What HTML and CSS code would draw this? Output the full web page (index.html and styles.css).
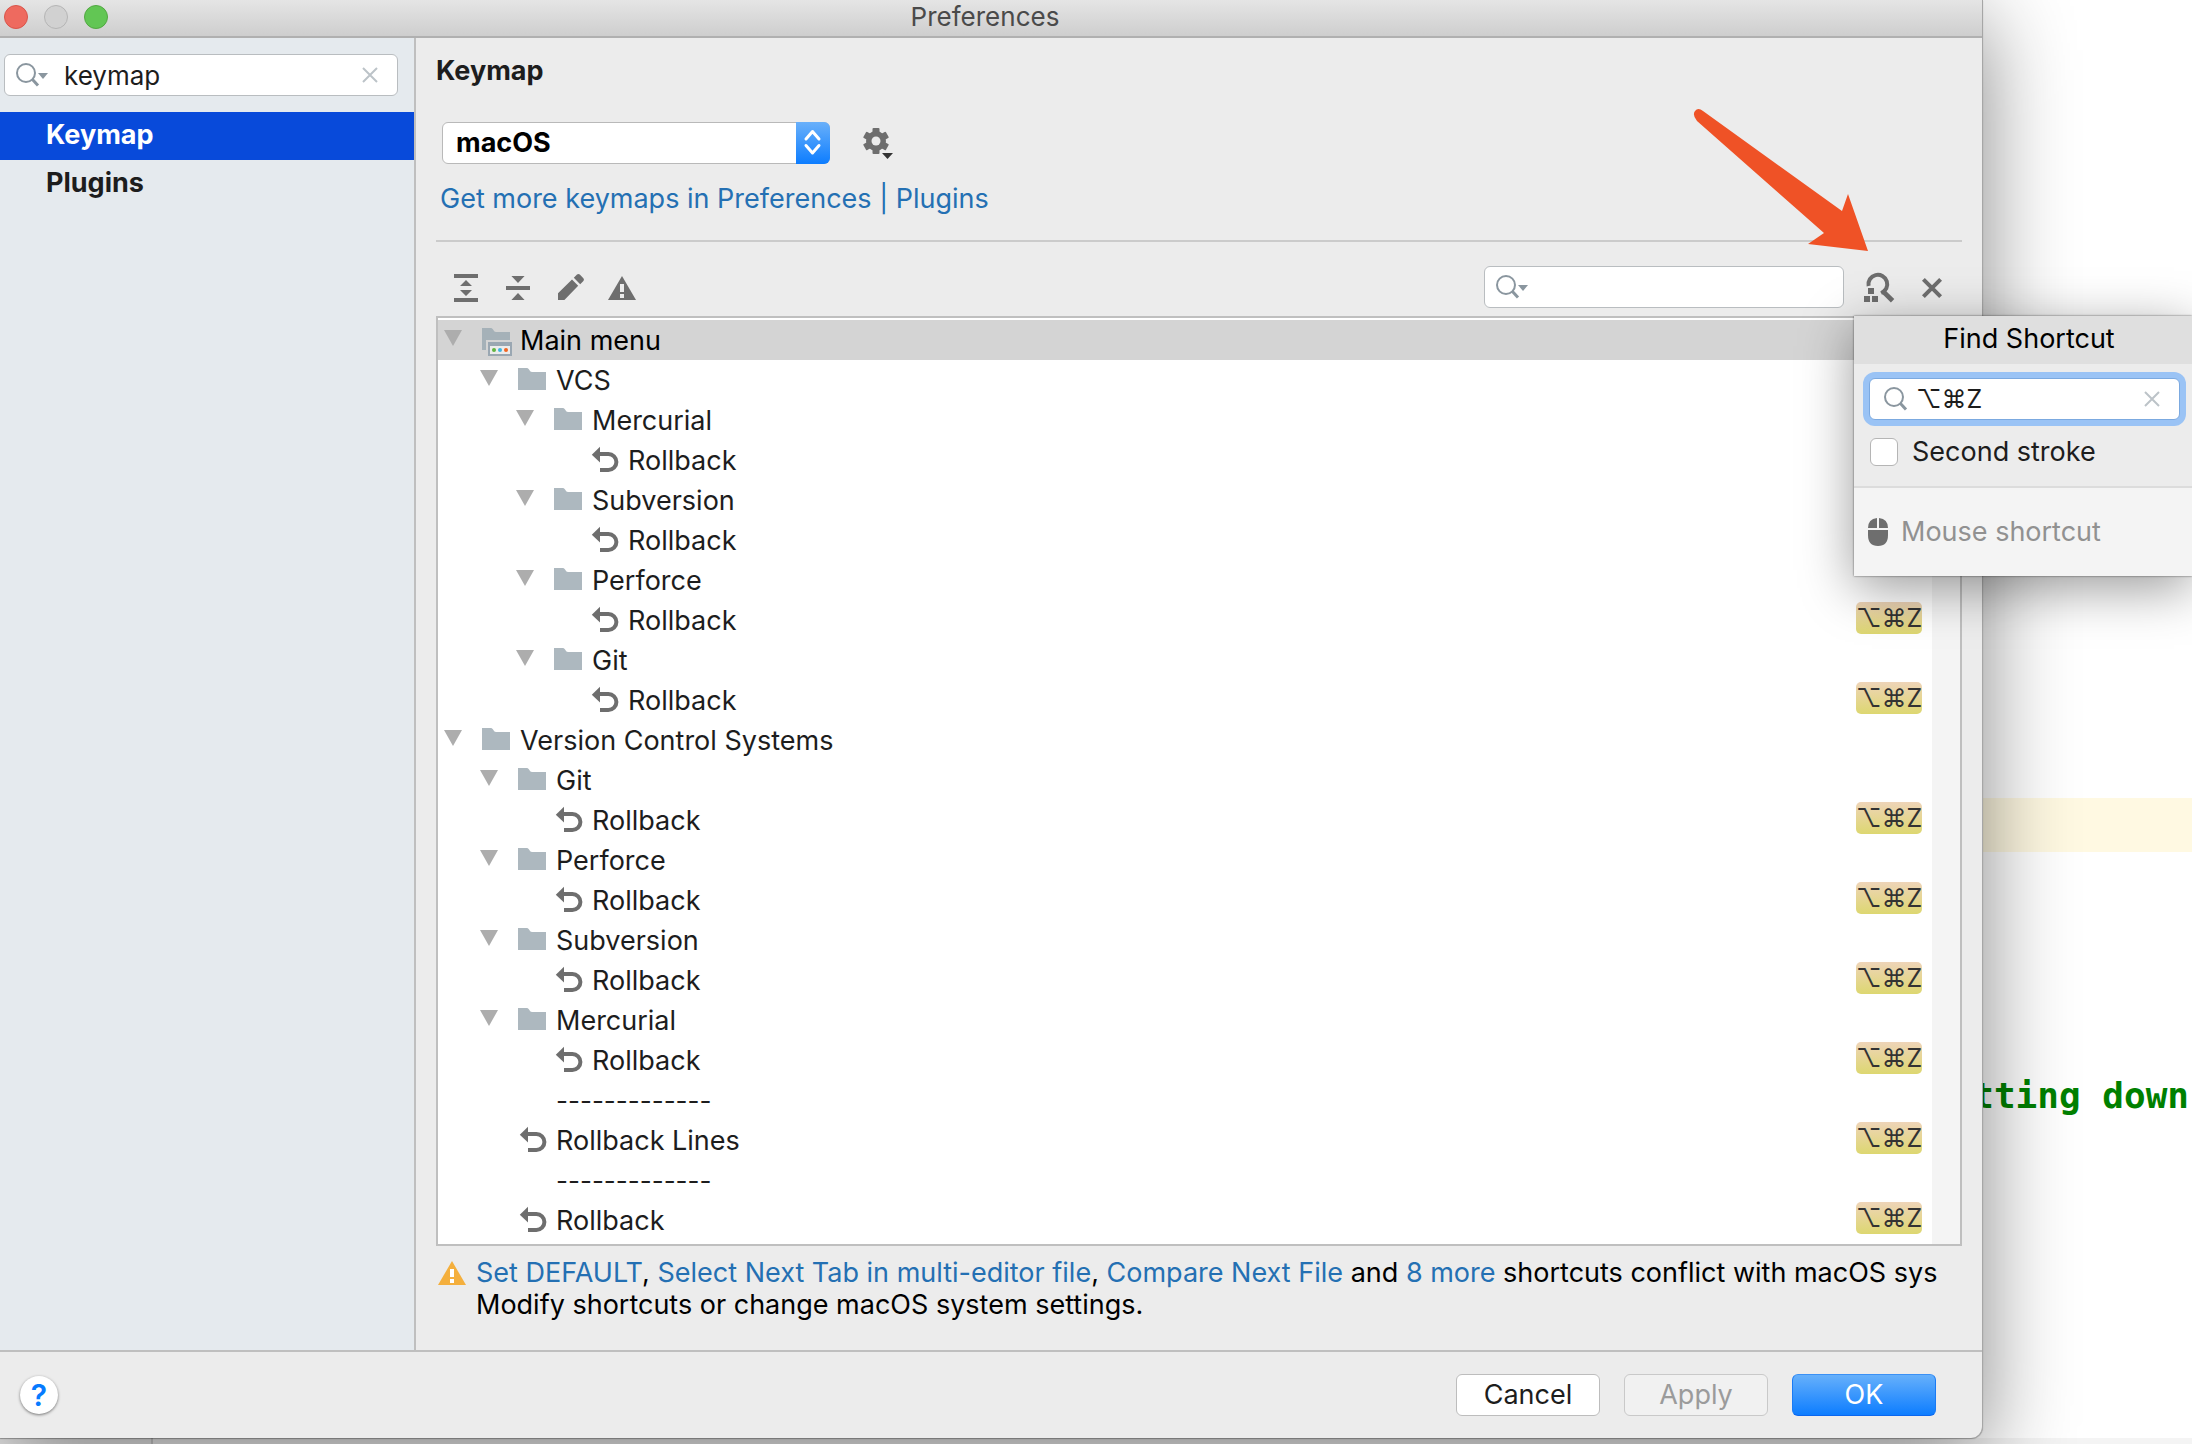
FILE: index.html
```html
<!DOCTYPE html>
<html lang="en">
<head>
<meta charset="utf-8">
<title>Preferences</title>
<link rel="stylesheet" href="styles.css">
</head>
<body>
<svg class="sprite" aria-hidden="true">
  <symbol id="i-arrow" viewBox="0 0 18 16"><path d="M0 0H18L9 16Z" fill="#adadad"/></symbol>
  <symbol id="i-folder" viewBox="0 1 16 16"><path d="M1 3H5.500C6.600 3 6.800 5 8 5H15V14H1Z" fill="#adb8bf"/></symbol>
  <symbol id="i-menu" viewBox="0 1 16 16"><path d="M1 3H5.500C6.600 3 6.800 5 8 5H15V9H3V14H1Z" fill="#a5b1b8"/><path d="M4 10H16V17H4Z" fill="#9aa7b2"/><path d="M5 12H15V16H5Z" fill="#ececec"/><circle cx="7" cy="14" r="1" fill="#62b543"/><circle cx="10" cy="14" r="1" fill="#40b6e0"/><circle cx="13" cy="14" r="1" fill="#f26522"/></symbol>
  <symbol id="i-undo" viewBox="0 2 16 16"><path d="M1.900 7.400L6 3.400V11.200Z" fill="#6e6e6e"/><path d="M5 7H10.200A4 4 0 0 1 10.200 15H6" fill="none" stroke="#6e6e6e" stroke-width="2"/></symbol>
  <symbol id="i-search" viewBox="0 0 24 24"><circle cx="10" cy="10" r="9" fill="none" stroke="#8a969f" stroke-width="2"/><path d="M16 16L22 22.500" stroke="#8a969f" stroke-width="3"/></symbol>
  <symbol id="i-search-menu" viewBox="0 0 34 24"><circle cx="10" cy="10" r="9" fill="none" stroke="#8a969f" stroke-width="2"/><path d="M16 16L22 22.500" stroke="#8a969f" stroke-width="3"/><path d="M22 10H32L27 16Z" fill="#8a969f"/></symbol>
  <symbol id="i-clear" viewBox="0 0 16 16"><path d="M1 1L15 15M15 1L1 15" stroke="#bcc3c8" stroke-width="2"/></symbol>
</svg>

<div class="desktop">
  <main class="window">
    <header class="titlebar">
      <div class="lights">
        <button class="light red" aria-label="Close"></button>
        <button class="light" aria-label="Minimize"></button>
        <button class="light green" aria-label="Zoom"></button>
      </div>
      <h1>Preferences</h1>
    </header>

    <div class="panes">
      <nav class="sidebar">
        <div class="field side-search">
          <svg width="34" height="24"><use href="#i-search-menu"/></svg>
          <input type="text" value="keymap" aria-label="Search preferences">
          <button class="plain" aria-label="Clear"><svg width="16" height="16"><use href="#i-clear"/></svg></button>
        </div>
        <a class="nav-item current" href="#keymap">Keymap</a>
        <a class="nav-item" href="#plugins">Plugins</a>
      </nav>

      <section class="content" id="keymap">
        <h2>Keymap</h2>
        <div class="scheme">
          <div class="combo">
            <select aria-label="Keymap scheme"><option>macOS</option></select>
            <svg class="combo-cap" width="34" height="42" viewBox="0 0 34 42" aria-hidden="true"><path d="M10 17L16.500 9.500L23 17M10 23.500L16.500 31L23 23.500" fill="none" stroke="#fff" stroke-width="3" stroke-linecap="round" stroke-linejoin="round"/></svg>
          </div>
          <button class="plain" aria-label="Scheme actions">
            <svg width="32" height="34" viewBox="0 -1 32 34"><g fill="#6e6e6e"><rect x="9.500" y="1" width="7" height="26" rx="1"/><rect x="9.500" y="1" width="7" height="26" rx="1" transform="rotate(60 13 14)"/><rect x="9.500" y="1" width="7" height="26" rx="1" transform="rotate(120 13 14)"/><circle cx="13" cy="14" r="10"/></g><circle cx="13" cy="14" r="4.500" fill="#ececec"/><path d="M19 26H30L24.500 32Z" fill="#333"/></svg>
          </button>
        </div>
        <a class="more" href="#plugins">Get more keymaps in Preferences | Plugins</a>
        <hr>
        <div class="toolbar">
          <button class="plain" aria-label="Expand all"><svg width="32" height="32" viewBox="0 0 16 16" fill="#6e6e6e"><path d="M2 1H14V3H2ZM2 13H14V15H2ZM8 4L11 7H5ZM5 9H11L8 12Z"/></svg></button>
          <button class="plain" aria-label="Collapse all"><svg width="32" height="32" viewBox="0 0 16 16" fill="#6e6e6e"><path d="M2 7H14V9H2ZM4.700 2H11.300L8 5.500ZM8 10.500L11.300 14H4.700Z"/></svg></button>
          <button class="plain" aria-label="Edit shortcut"><svg width="32" height="32" viewBox="0 0 16 16" fill="#6e6e6e"><path d="M2 10.600L9 3.800L12.100 6.900L5.200 14H2ZM9.900 2.900L11.500 1.300Q12.200 .7 12.900 1.300L14.700 3.100Q15.300 3.800 14.700 4.500L13.100 6.100Z"/></svg></button>
          <button class="plain" aria-label="Show conflicts"><svg width="32" height="32" viewBox="0 0 16 16"><path d="M8 2L15 14H1Z" fill="#6e6e6e"/><path d="M7 6H9V10H7ZM7 11H9V13H7Z" fill="#ececec"/></svg></button>
          <div class="field tree-search">
            <svg width="34" height="24"><use href="#i-search-menu"/></svg>
            <input type="text" aria-label="Search actions">
          </div>
          <button class="plain" aria-label="Find by shortcut"><svg width="32" height="32" viewBox="1 0 16 16"><path d="M3.200 7A4.700 4.700 0 1 1 9.500 10.500" fill="none" stroke="#6e6e6e" stroke-width="2" transform="translate(.1 0)"/><path d="M10 9.200L15.300 14.400" stroke="#6e6e6e" stroke-width="2.400"/><path d="M3 8H6V11H3ZM1 12H4V15H1ZM5 12H8V15H5Z" fill="#6e6e6e"/></svg></button>
          <button class="plain" aria-label="Clear filter"><svg width="32" height="32" viewBox="0 0 16 16"><path d="M3.700 3.700L12.300 12.300M12.300 3.700L3.700 12.300" stroke="#6e6e6e" stroke-width="2"/></svg></button>
        </div>

        <div class="tree">
          <ul>
            <li class="row selected"><svg class="twist"><use href="#i-arrow"/></svg><svg class="ico"><use href="#i-menu"/></svg><span>Main menu</span></li>
            <li class="row l1"><svg class="twist"><use href="#i-arrow"/></svg><svg class="ico"><use href="#i-folder"/></svg><span>VCS</span></li>
            <li class="row l2"><svg class="twist"><use href="#i-arrow"/></svg><svg class="ico"><use href="#i-folder"/></svg><span>Mercurial</span></li>
            <li class="row leaf l3"><svg class="ico"><use href="#i-undo"/></svg><span>Rollback</span></li>
            <li class="row l2"><svg class="twist"><use href="#i-arrow"/></svg><svg class="ico"><use href="#i-folder"/></svg><span>Subversion</span></li>
            <li class="row leaf l3"><svg class="ico"><use href="#i-undo"/></svg><span>Rollback</span></li>
            <li class="row l2"><svg class="twist"><use href="#i-arrow"/></svg><svg class="ico"><use href="#i-folder"/></svg><span>Perforce</span></li>
            <li class="row leaf l3"><svg class="ico"><use href="#i-undo"/></svg><span>Rollback</span><kbd>⌥⌘Z</kbd></li>
            <li class="row l2"><svg class="twist"><use href="#i-arrow"/></svg><svg class="ico"><use href="#i-folder"/></svg><span>Git</span></li>
            <li class="row leaf l3"><svg class="ico"><use href="#i-undo"/></svg><span>Rollback</span><kbd>⌥⌘Z</kbd></li>
            <li class="row"><svg class="twist"><use href="#i-arrow"/></svg><svg class="ico"><use href="#i-folder"/></svg><span>Version Control Systems</span></li>
            <li class="row l1"><svg class="twist"><use href="#i-arrow"/></svg><svg class="ico"><use href="#i-folder"/></svg><span>Git</span></li>
            <li class="row leaf l2"><svg class="ico"><use href="#i-undo"/></svg><span>Rollback</span><kbd>⌥⌘Z</kbd></li>
            <li class="row l1"><svg class="twist"><use href="#i-arrow"/></svg><svg class="ico"><use href="#i-folder"/></svg><span>Perforce</span></li>
            <li class="row leaf l2"><svg class="ico"><use href="#i-undo"/></svg><span>Rollback</span><kbd>⌥⌘Z</kbd></li>
            <li class="row l1"><svg class="twist"><use href="#i-arrow"/></svg><svg class="ico"><use href="#i-folder"/></svg><span>Subversion</span></li>
            <li class="row leaf l2"><svg class="ico"><use href="#i-undo"/></svg><span>Rollback</span><kbd>⌥⌘Z</kbd></li>
            <li class="row l1"><svg class="twist"><use href="#i-arrow"/></svg><svg class="ico"><use href="#i-folder"/></svg><span>Mercurial</span></li>
            <li class="row leaf l2"><svg class="ico"><use href="#i-undo"/></svg><span>Rollback</span><kbd>⌥⌘Z</kbd></li>
            <li class="row leaf l1"><svg class="ico"></svg><span class="divider">-------------</span></li>
            <li class="row leaf l1"><svg class="ico"><use href="#i-undo"/></svg><span>Rollback Lines</span><kbd>⌥⌘Z</kbd></li>
            <li class="row leaf l1"><svg class="ico"></svg><span class="divider">-------------</span></li>
            <li class="row leaf l1"><svg class="ico"><use href="#i-undo"/></svg><span>Rollback</span><kbd>⌥⌘Z</kbd></li>
          </ul>
          <div class="track"></div>
        </div>

        <div class="conflict">
          <svg width="32" height="32" viewBox="0 0 16 16"><path d="M8 2L15 14H1Z" fill="#f4af3d"/><path d="M7 6H9V10H7ZM7 11H9V13H7Z" fill="#fff"/></svg>
          <p><a href="#a1">Set DEFAULT</a>, <a href="#a2">Select Next Tab in multi-editor file</a>, <a href="#a3">Compare Next File</a> and <a href="#a4">8 more</a> shortcuts conflict with macOS sys<br>Modify shortcuts or change macOS system settings.</p>
        </div>
      </section>
    </div>

    <footer class="actions">
      <button class="help" aria-label="Help">?</button>
      <button class="push">Cancel</button>
      <button class="push" disabled>Apply</button>
      <button class="push primary">OK</button>
    </footer>
  </main>

  <aside class="editor">
    <div class="caret-line"></div>
    <code>tting down</code>
  </aside>

  <div class="below"><div class="gutter"></div></div>

  <section class="popup" aria-label="Find Shortcut">
    <h3>Find Shortcut</h3>
    <div class="popup-body">
      <div class="field focused">
        <svg width="24" height="24"><use href="#i-search"/></svg>
        <input type="text" value="⌥⌘Z" aria-label="Shortcut">
        <button class="plain" aria-label="Clear"><svg width="16" height="16"><use href="#i-clear"/></svg></button>
      </div>
      <label class="check"><input type="checkbox">Second stroke</label>
    </div>
    <div class="mouse">
      <svg width="20" height="28" viewBox="0 0 20 28" fill="#6e6e6e"><path d="M9 0V10H0Q0 1 9 0ZM11 0V10H20Q20 1 11 0ZM0 12H20V17Q20 28 10 28Q0 28 0 17Z"/></svg>
      <span>Mouse shortcut</span>
    </div>
  </section>

  <svg class="pointer" width="180" height="150" viewBox="1692 106 180 150" aria-hidden="true"><path d="M1697 121Q1692 115 1695 111Q1698 107 1703 111L1842 211L1848 194L1868 251L1808 244L1824 233Z" fill="#ef5226"/></svg>
</div>
</body>
</html>
```

FILE: styles.css
```css
* { box-sizing: border-box; }

body {
  margin: 0;
  background: #fff;
  color: #1d1d1d;
  font: 27px/32px Inter, "Liberation Sans", "DejaVu Sans", sans-serif;
}

h1, h2, h3, p, ul { margin: 0; padding: 0; font-size: 27px; }
ul { list-style: none; }
a { color: #2470b3; text-decoration: none; }
button, input, select { font: inherit; color: inherit; }
svg { display: block; flex: none; }

.sprite { position: absolute; width: 0; height: 0; }

.plain {
  display: block;
  padding: 0;
  border: 0;
  background: none;
}

.desktop {
  position: relative;
  display: grid;
  grid-template-columns: minmax(0, 1fr) 209px;
  grid-template-rows: 1fr 6px;
  min-height: 100vh;
  overflow: hidden;
}

/* Dialog window */
.window {
  position: relative;
  z-index: 1;
  display: flex;
  flex-direction: column;
  border-right: 1px solid #a6a6a6;
  border-bottom-right-radius: 12px;
  background: #ececec;
  box-shadow: 0 20px 90px rgba(0, 0, 0, .48), 0 1px 1px rgba(0, 0, 0, .3);
}

.titlebar {
  display: grid;
  grid-template-columns: 120px 1fr 132px;
  align-items: center;
  height: 38px;
  padding-bottom: 3px;
  border-bottom: 2px solid #b0b0b0;
  background: linear-gradient(#e5e5e5, #cecece);
}

.titlebar h1 {
  color: #4a4a4a;
  font-size: 26px;
  font-weight: 400;
  text-align: center;
}

.lights { display: flex; gap: 16px; padding-left: 4px; }

.light {
  width: 24px;
  height: 24px;
  padding: 0;
  border: 1px solid #b5b5b5;
  border-radius: 50%;
  background: #d1d1d1;
}

.light.red { border-color: #d9554b; background: #ee6a5f; }
.light.green { border-color: #52a842; background: #62c654; }

.panes {
  display: grid;
  flex: 1;
  grid-template-columns: 416px minmax(0, 1fr);
}

.sidebar {
  border-right: 2px solid #bfbfbf;
  background: #e5eaee;
}

.field {
  display: flex;
  align-items: center;
  height: 42px;
  padding: 0 19px 0 11px;
  border: 1px solid #b9bdc0;
  border-radius: 6px;
  background: #fff;
}

.field input {
  flex: 1;
  min-width: 0;
  height: 38px;
  padding: 0;
  border: 0;
  outline: 0;
  background: none;
  font-size: 26px;
}

.side-search { gap: 14px; margin: 16px 16px 16px 4px; }

.nav-item {
  display: block;
  padding: 0 0 2px 46px;
  color: #1d1d1d;
  font-weight: 700;
  line-height: 46px;
}

.nav-item.current { background: #084ada; color: #fff; }

.content { padding: 17px 20px 29px; }

.scheme {
  display: flex;
  align-items: center;
  gap: 33px;
  margin: 35px 0 19px 6px;
}

.combo {
  display: grid;
  width: 388px;
  height: 42px;
}

.combo select,
.combo-cap { grid-area: 1 / 1; }

.combo select {
  appearance: none;
  padding: 0 40px 0 13px;
  border: 1px solid #b9b9b9;
  border-radius: 6px;
  background: #fff;
  color: #000;
  font-weight: 700;
}

.combo-cap {
  justify-self: end;
  border-radius: 0 6px 6px 0;
  background: linear-gradient(#69b0fa, #0d7dff);
  pointer-events: none;
}

.more { display: block; margin-left: 4px; }

hr {
  height: 2px;
  margin: 25px 0 24px;
  border: 0;
  background: #cbcbcb;
}

.toolbar {
  display: flex;
  align-items: center;
  gap: 20px;
  margin-bottom: 8px;
  padding: 0 14px;
}

.toolbar .plain { padding-top: 2px; }
.tree-search { width: 360px; margin-left: auto; }

.tree {
  display: grid;
  grid-template-columns: minmax(0, 1fr) 28px;
  border: 2px solid #bfbfbf;
  background: #fff;
}

.tree ul { padding: 2px 0 4px; }
.track { background: #f4f4f4; }

.row {
  display: flex;
  align-items: center;
  height: 40px;
  padding: 0 10px 0 6px;
}

.row.selected { background: #d4d4d4; color: #000; }
.row.l1 { padding-left: 42px; }
.row.l2 { padding-left: 78px; }
.row.l3 { padding-left: 114px; }

.row span { padding-top: 2px; }
.row .divider { font-size: 26px; }

.twist { width: 18px; height: 16px; margin: 0 18px 4px 0; }
.ico { width: 32px; height: 32px; margin-right: 8px; }
.leaf .ico { margin-left: 36px; }

kbd {
  width: 66px;
  margin: 0 0 4px auto;
  border-radius: 5px;
  background: linear-gradient(#eed4b8, #ddd770);
  color: #333;
  font: inherit;
  font-size: 25px;
  text-align: center;
}

.conflict {
  display: flex;
  gap: 8px;
  margin-top: 11px;
  overflow: hidden;
  color: #000;
  white-space: nowrap;
}

.actions {
  display: flex;
  align-items: center;
  gap: 24px;
  padding: 22px 46px 22px 20px;
  border-top: 2px solid #bfbfbf;
}

.help {
  width: 38px;
  height: 38px;
  margin-right: auto;
  padding: 0;
  border: 0;
  border-radius: 50%;
  background: #fff;
  box-shadow: 0 1px 3px rgba(0, 0, 0, .5);
  color: #067bff;
  font-size: 30px;
  font-weight: 600;
}

.push {
  width: 144px;
  height: 42px;
  padding: 0;
  border: 1px solid #bdbdbd;
  border-radius: 6px;
  background: #fff;
}

.push:disabled { background: #f1f1f1; color: #9b9b9b; border-color: #c9c9c9; }

.push.primary {
  border-color: #3b91f5 #1a7bf5 #0a66ee;
  background: linear-gradient(#66b0fb, #0d7dff);
  color: #fff;
}

/* Editor visible behind the dialog */
.editor { padding-top: 798px; background: #fff; }
.caret-line { height: 54px; background: #fff9e2; }

.editor code {
  display: flex;
  justify-content: flex-end;
  margin-top: 222px;
  padding-right: 3px;
  color: #008000;
  font: 700 36px/44px "DejaVu Sans Mono", monospace;
  white-space: pre;
}

.below { grid-column: 1 / -1; background: #f4f4f4; }
.gutter { width: 153px; height: 6px; border-right: 2px solid #cfcfcf; background: #ececec; }

/* Shortcut popup floating over the dialog and the editor */
.popup {
  position: absolute;
  z-index: 2;
  top: 316px;
  right: 0;
  width: 338px;
  background: #ececec;
  box-shadow: 0 0 2px rgba(0, 0, 0, .6), 0 12px 50px rgba(0, 0, 0, .4);
}

.popup h3 {
  padding: 0 0 2px 12px;
  background: #dfdfdf;
  color: #000;
  font-weight: 400;
  line-height: 46px;
  text-align: center;
}

.popup-body {
  padding: 14px 12px 18px 15px;
  border-bottom: 2px solid #dcdcdc;
}

.focused {
  gap: 8px;
  padding-left: 14px;
  border-color: #7ba9e0;
  box-shadow: 0 0 0 6px #9ac3f5;
}

.focused input { font-size: 25px; }

.check {
  display: flex;
  align-items: center;
  gap: 14px;
  margin: 16px 0 0 1px;
}

.check input {
  appearance: none;
  width: 28px;
  height: 28px;
  margin: 0;
  border: 1px solid #b5b5b5;
  border-radius: 6px;
  background: #fff;
}

.mouse {
  display: flex;
  align-items: center;
  gap: 13px;
  height: 88px;
  padding-left: 14px;
  background: #f4f4f4;
  color: #919191;
}

/* Annotation arrow */
.pointer { position: absolute; z-index: 3; top: 106px; right: 320px; }
```
